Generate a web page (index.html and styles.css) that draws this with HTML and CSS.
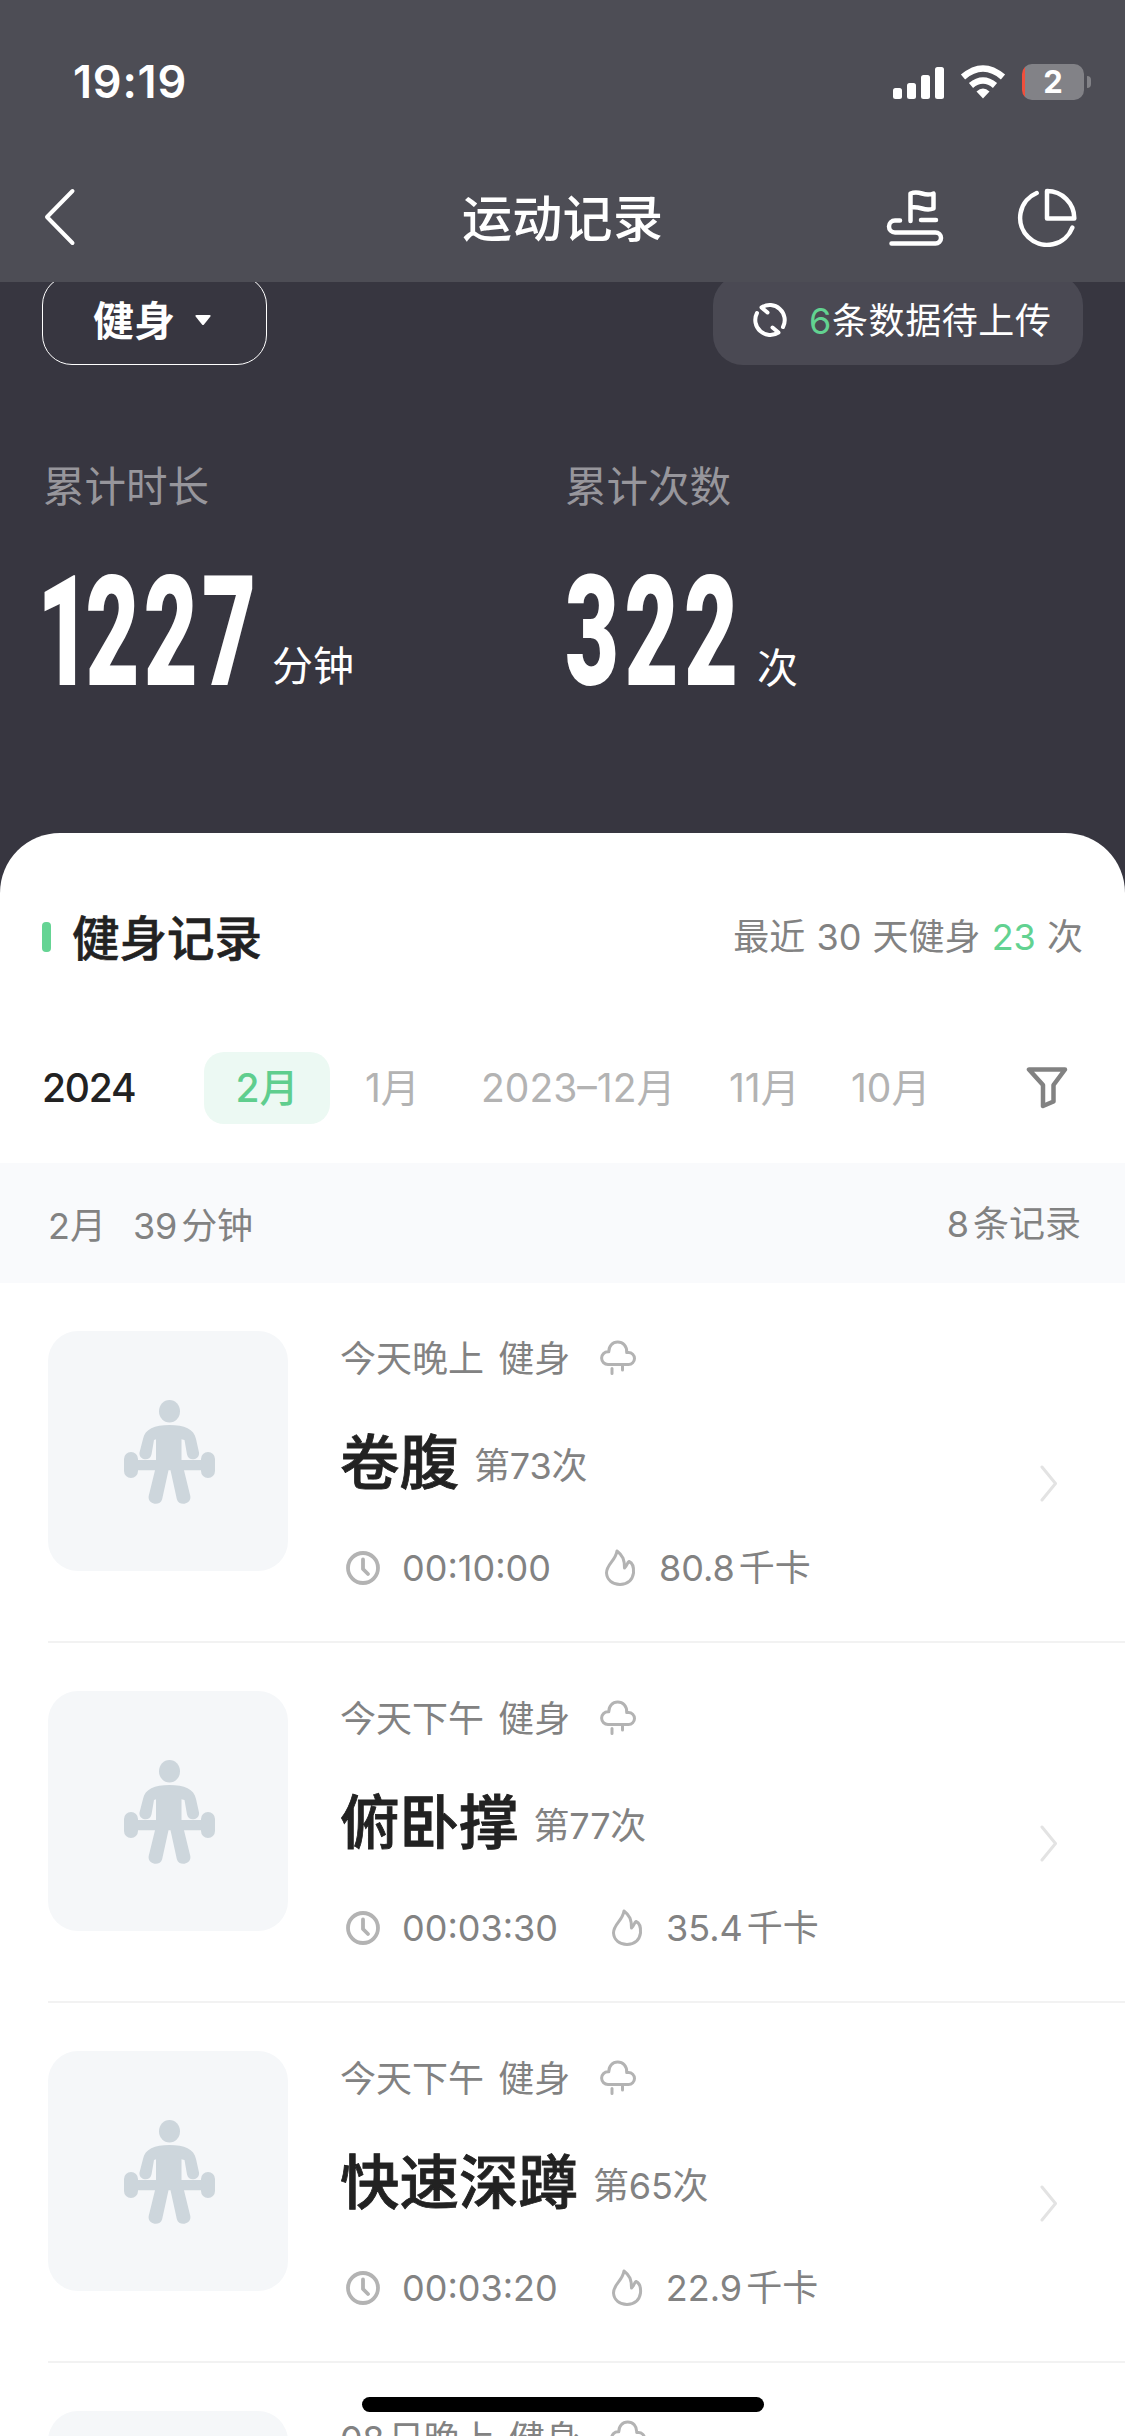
FILE: index.html
```html
<!DOCTYPE html>
<html lang="zh-CN">
<head>
<meta charset="utf-8">
<title>运动记录</title>
<link rel="stylesheet" href="styles.css">
</head>
<body>
<svg class="defs" aria-hidden="true">
  <symbol id="figure" viewBox="0 0 91 104">
    <ellipse cx="45.500" cy="11.300" rx="10.500" ry="11.300"/>
    <path d="M45.500 25c15 0 24.500 4 26.500 14l3 13.500c1 7-10 10-12 2L60.500 40l-3-.7V60H77v-1a7 7 0 0 1 14 0v12a7 7 0 0 1-14 0v-.7H60L66.300 96c1.500 8.500-11.500 11-13.500 3L46.500 70.300h-2L38.200 99c-2 8-15 5.500-13.500-3L31 70.300H14v.7a7 7 0 0 1-14 0V59a7 7 0 0 1 14 0v1h18V39.300l-2 .7-2.500 14.500c-2 8-13 5-12-2L19 39c2-10 11.500-14 26.500-14z"/>
  </symbol>
  <symbol id="cloud" viewBox="0 0 36 36">
    <path d="M8 24.500a6.400 6.400 0 0 1 0-12.800h.800C8.800 6 12.500 2 17.700 2s9.300 4 9 10.500h1.800a6 6 0 0 1 0 12z"/>
    <path d="M12 28.500v5M22.500 25v5"/>
  </symbol>
  <symbol id="clock" viewBox="0 0 36 36">
    <circle cx="18" cy="18" r="15"/>
    <path d="M18 9.500v9.500l5 5"/>
  </symbol>
  <symbol id="flame" viewBox="0 0 32 38">
    <path d="M13 2c6 4.500 7.500 9 7.500 17 2.500-2 2.500-5 4.500-6.500C28.500 14 30 18 29.500 24c-1 7-6 11.500-13.500 11.500S3 31 2.500 24c0-9 9-12 10.500-22z"/>
  </symbol>
  <symbol id="next" viewBox="0 0 20 38">
    <path d="M3 3l13.500 16.500L3 36"/>
  </symbol>
</svg>

<header class="topbar">
  <div class="status">
    <span class="time">19:19</span>
    <svg class="signal" viewBox="0 0 52 33" width="52" height="33"><rect x="0" y="22" width="9" height="11" rx="2.500"/><rect x="14" y="17" width="9" height="16" rx="2.500"/><rect x="28" y="9" width="9" height="24" rx="2.500"/><rect x="42" y="1" width="9" height="32" rx="2.500"/></svg>
    <svg class="wifi" viewBox="0 0 46 34" width="46" height="34"><path d="M3 12Q23-5 43 12M11 20.500Q23 10.500 35 20.500"/><path class="dot" d="M16.500 26.500q6.500-6 13 0L23 33.500z"/></svg>
    <span class="battery">2</span>
    <span class="nub"></span>
  </div>
  <nav class="nav">
    <svg class="back" viewBox="0 0 34 60" width="34" height="60"><path d="M30.500 4L5 30l25.500 26"/></svg>
    <h1 class="title">运动记录</h1>
    <svg class="route" viewBox="0 0 60 60" width="60" height="60"><path d="M25.500 34V6.500q5-2 11.500 0t11.500 0V21.500q-5 2-11.500 0t-11.500-1M36 33H51M15 33.500H10a6 6 0 0 0 0 12h40.500a5.500 5.500 0 0 1 0 11H6.500"/></svg>
    <svg class="chart" viewBox="0 0 60 60" width="60" height="60"><path d="M19.700 6A27 27 0 1 0 55.300 40.700M30 4V31.500H57.300A27.300 27.300 0 0 0 30 4z"/></svg>
  </nav>
</header>

<section class="hero">
  <div class="filters">
    <div class="type"><b>健身</b><svg viewBox="0 0 18 12" width="18" height="12"><path d="M2.500 1h13q2 0 .5 2L10 10.500q-1 1-2 0L2 3Q.5 1 2.500 1z"/></svg></div>
    <div class="upload">
      <svg viewBox="0 0 36 36" width="36" height="36"><path d="M5 11A15 15 0 0 0 26.500 30.500L20.500 25.500M31 25A15 15 0 0 0 9.500 5.500L15.500 10.500"/></svg>
      <span><i>6</i>条数据待上传</span>
    </div>
  </div>
  <div class="stats">
    <div class="stat"><p class="label">累计时长</p><p class="value"><span class="num four"><span><span class="one">1</span>227</span></span><small>分钟</small></p></div>
    <div class="stat"><p class="label">累计次数</p><p class="value"><span class="num"><span>322</span></span><small class="low">次</small></p></div>
  </div>
</section>

<main class="sheet">
  <div class="heading"><span class="mark"></span><h2>健身记录</h2><p>最近 30 天健身 <i>23</i> 次</p></div>
  <div class="months">
    <b class="year">2024</b><b class="on">2月</b><span class="m1">1月</span><span class="m2">2023–12月</span><span class="m3">11月</span><span class="m4">10月</span>
    <svg class="funnel" viewBox="0 0 42 44" width="42" height="44"><path d="M3 3.500h36L27.500 19v16.500L17 40V19z"/></svg>
  </div>
  <div class="summary"><span class="month">2月</span><span class="mins">39<em>分钟</em></span><span class="count">8<em>条记录</em></span></div>

  <article class="item">
    <div class="thumb"><svg><use href="#figure"/></svg></div>
    <div class="info">
      <p class="when"><span>今天晚上 健身</span><svg><use href="#cloud"/></svg></p>
      <h3>卷腹<small>第73次</small></h3>
      <p class="data"><svg class="clock"><use href="#clock"/></svg><span>00:10:00</span><svg class="flame"><use href="#flame"/></svg><span>80.8<em>千卡</em></span></p>
    </div>
    <svg class="next"><use href="#next"/></svg>
  </article>
  <article class="item">
    <div class="thumb"><svg><use href="#figure"/></svg></div>
    <div class="info">
      <p class="when"><span>今天下午 健身</span><svg><use href="#cloud"/></svg></p>
      <h3>俯卧撑<small>第77次</small></h3>
      <p class="data"><svg class="clock"><use href="#clock"/></svg><span>00:03:30</span><svg class="flame"><use href="#flame"/></svg><span>35.4<em>千卡</em></span></p>
    </div>
    <svg class="next"><use href="#next"/></svg>
  </article>
  <article class="item">
    <div class="thumb"><svg><use href="#figure"/></svg></div>
    <div class="info">
      <p class="when"><span>今天下午 健身</span><svg><use href="#cloud"/></svg></p>
      <h3>快速深蹲<small>第65次</small></h3>
      <p class="data"><svg class="clock"><use href="#clock"/></svg><span>00:03:20</span><svg class="flame"><use href="#flame"/></svg><span>22.9<em>千卡</em></span></p>
    </div>
    <svg class="next"><use href="#next"/></svg>
  </article>
  <article class="item">
    <div class="thumb"></div>
    <div class="info">
      <p class="when last"><span>08<em>日晚上 健身</em></span><svg><use href="#cloud"/></svg></p>
    </div>
  </article>
</main>
<div class="home"></div>
</body>
</html>
```
FILE: styles.css
```css
* { box-sizing: border-box; margin: 0; padding: 0; }
html, body { width: 1125px; height: 2436px; overflow: hidden; }
body {
  display: flex; flex-direction: column; position: relative;
  background: #373640; color: #828282;
  font: 36px/1.2 Inter, "Noto Sans CJK SC", sans-serif;
}
svg { display: block; flex: none; fill: none; }
i, em { font-style: normal; }
span, p, b, small, h1, h2, h3 { white-space: nowrap; }
.defs { position: absolute; width: 0; height: 0; }

.topbar { height: 282px; flex: none; background: #4d4d55; color: #fff; }
.status { display: flex; align-items: center; height: 164px; padding-left: 73px; }
.time { width: 820px; font-size: 45px; font-weight: 600; letter-spacing: .8px; }
.signal { fill: #fff; margin-right: 15px; }
.wifi { stroke: #fff; stroke-width: 6.500; margin-right: 16px; }
.wifi .dot { fill: #fff; stroke: none; }
.battery {
  width: 62px; height: 36px; border-radius: 10px; text-align: center;
  font-size: 31px; line-height: 36px; font-weight: 700;
  background: linear-gradient(90deg, #f04f3c 3px, #828287 3px);
}
.nub { width: 4px; height: 12px; margin-left: 3px; border-radius: 0 6px 6px 0; background: #828287; }
.nav { display: flex; align-items: center; height: 106px; padding-left: 42px; stroke: #fff; stroke-linecap: round; stroke-linejoin: round; }
.back { stroke-width: 4; }
.title { width: 204px; margin: 0 219px 0 386px; padding-top: 4px; font-size: 50px; line-height: 60px; font-weight: 500; letter-spacing: .3px; stroke: none; }
.route, .chart { stroke-width: 4.500; }
.chart { margin-left: 72px; }

.hero { height: 551px; flex: none; }
.filters { display: flex; justify-content: space-between; height: 83px; padding: 0 42px; overflow: hidden; }
.type, .upload { display: flex; align-items: center; height: 90px; margin-top: -7px; border-radius: 30px; color: #fff; }
.type { width: 225px; padding-left: 50px; border: 1.500px solid #fff; }
.type b { width: 101px; padding-top: 2px; font-size: 41px; font-weight: 600; line-height: 60px; }
.type svg { fill: #fff; }
.upload { width: 370px; padding-left: 39px; background: #4a4953; }
.upload svg { stroke: #fff; stroke-width: 4; stroke-linecap: round; stroke-linejoin: round; margin-right: 21px; }
.upload span { padding-top: 3px; letter-spacing: .6px; }
i { color: #62d291; }
.stats { display: grid; grid-template-columns: 522px 1fr; padding: 97px 0 0 42px; }
.label { padding-left: 1px; font-size: 41.500px; line-height: 50px; color: #97969c; }
.value { display: flex; align-items: flex-end; height: 136px; margin-top: 43px; color: #fff; }
.num { width: 193px; height: 136px; padding-top: 10px; }
.num.four { width: 230px; }
.num > span { display: block; width: max-content; margin-left: 1px; font: 900 154px/136px Roboto, sans-serif; letter-spacing: 9px; transform: scaleX(.605); transform-origin: 0 0; }
.num.four > span { margin-left: -5px; letter-spacing: 7px; }
.num .one { letter-spacing: -9px; }
.value small { font-size: 41px; line-height: 50px; }
.value .low { line-height: 46px; }

.sheet { height: 1603px; flex: none; background: #fff; border-radius: 60px 60px 0 0; overflow: hidden; }
.heading { display: flex; align-items: center; height: 208px; padding: 0 42px; }
.mark { width: 9px; height: 30px; border-radius: 4px; background: #65d494; }
h2 { margin-left: 21px; padding-top: 3px; font-size: 47.500px; line-height: 60px; font-weight: 500; color: #222; -webkit-text-stroke: .6px #222; }
.heading p { margin-left: auto; padding-top: 2px; word-spacing: 1px; }
.months { display: flex; align-items: center; height: 122px; padding: 11px 0 39px 42px; font-size: 39px; color: #b3b3b3; }
.months b { font-weight: 500; }
.year { width: 162px; color: #222; letter-spacing: -1.200px; }
.on { width: 126px; height: 72px; line-height: 72px; text-align: center; border-radius: 20px; background: #ecf9f3; color: #5fce8e; margin-right: 35px; }
.m1 { width: 116px; }
.m2 { width: 248px; }
.m3 { width: 122px; }
.m4 { width: 175px; }
.funnel { stroke: #828282; stroke-width: 4.500; stroke-linejoin: round; }
.summary { display: flex; align-items: center; height: 120px; padding: 4px 44px 0 48px; background: #f9fafc; }
.month, .mins { padding-top: 4px; }
.mins { margin-left: 27px; letter-spacing: -.2px; }
.count { margin-left: auto; }
.summary em, .data em, .when em { margin-left: 4px; }

.item { display: flex; height: 360px; padding-top: 48px; margin-left: 48px; border-bottom: 2px solid #f2f2f2; }
.thumb { display: flex; align-items: center; justify-content: center; width: 240px; height: 240px; border-radius: 30px; background: #f5f7f9; }
.thumb svg { width: 91px; height: 104px; margin: 1px 0 0 3px; fill: #cdd6dc; }
.info { width: 701px; margin-left: 52px; }
.info svg { stroke: #b3b3b3; stroke-width: 3; stroke-linecap: round; stroke-linejoin: round; }
.when { display: flex; align-items: center; height: 56px; word-spacing: 4px; }
.when span { padding-top: 2px; }
.when svg { width: 36px; height: 36px; margin: 0 0 2px 30px; }
.when.last { letter-spacing: -.4px; }
h3 { display: flex; align-items: center; height: 90px; margin-top: 30px; font-size: 59.500px; line-height: 90px; font-weight: 500; color: #222; -webkit-text-stroke: .8px #222; }
h3 small { margin-left: 15px; padding-top: 7px; font-size: 36px; line-height: 50px; font-weight: 400; letter-spacing: -.2px; color: #828282; -webkit-text-stroke: 0; }
.data { display: flex; align-items: center; height: 44px; margin-top: 39px; }
.data span { padding-top: 2px; }
.info .data .clock { width: 36px; height: 36px; margin: 0 21px 0 5px; stroke-width: 3.800; }
.data .flame { width: 32px; height: 38px; margin: 0 23px 0 53px; }
.next { width: 20px; height: 38px; margin-top: 133px; stroke: #e3e3e3; stroke-width: 3; stroke-linecap: round; stroke-linejoin: round; margin-left: -2px; }
.home { position: absolute; left: 362px; top: 2397px; width: 402px; height: 15px; border-radius: 8px; background: #000; }
```
